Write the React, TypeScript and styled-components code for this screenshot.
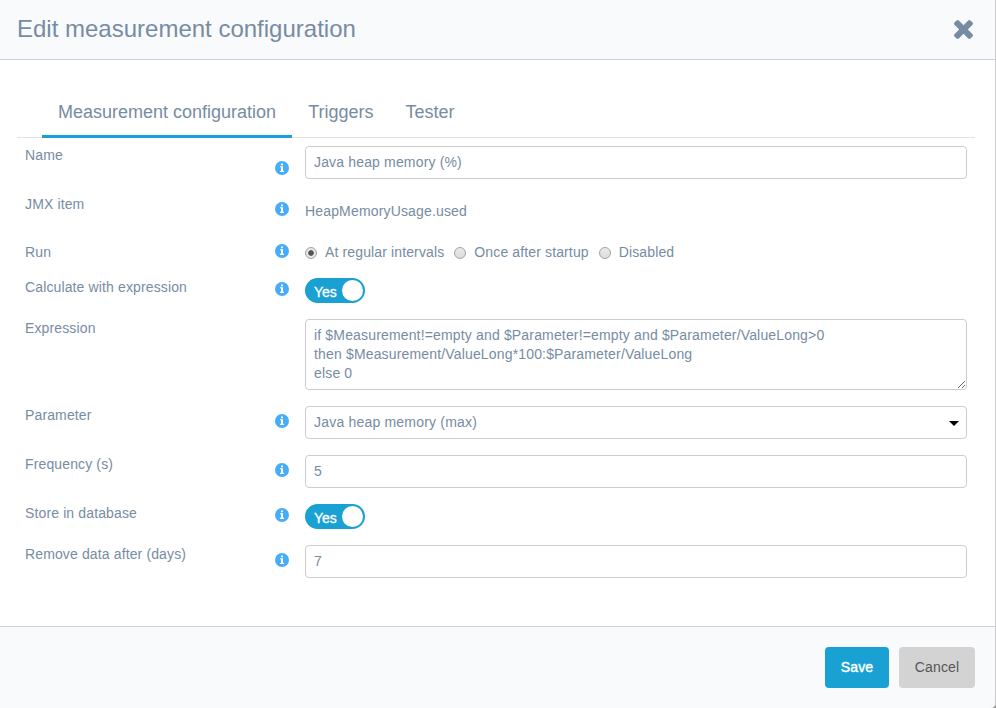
import React from "react";
import styled, { createGlobalStyle } from "styled-components";

const GlobalStyle = createGlobalStyle`
  *, *::before, *::after { box-sizing: border-box; }
  html, body { margin: 0; padding: 0; overflow: hidden; background: #999; }
  body, input, textarea, button {
    font-family: "Liberation Sans", Arial, Helvetica, sans-serif;
    font-size: 14px;
    letter-spacing: 0.16px;
    color: #778ca2;
  }
`;

const Dialog = styled.div`
  display: flex;
  flex-direction: column;
  width: 996px;
  height: 708px;
  background: #fff;
  border-right: 1px solid #ccc;
  border-bottom-right-radius: 5px;
  overflow: hidden;
`;

const Header = styled.header`
  display: flex;
  align-items: center;
  justify-content: space-between;
  height: 60px;
  flex: none;
  padding: 0 22px 2px 17px;
  background: #f8fafc;
  border-bottom: 1px solid #d0d0d0;
`;

const Title = styled.h1`
  margin: 0;
  font-size: 24px;
  line-height: 28px;
  font-weight: 400;
  letter-spacing: 0;
`;

const CloseButton = styled.button`
  display: flex;
  padding: 0;
  margin-top: 2px;
  border: 0;
  background: none;
  svg { width: 19px; height: 19px; fill: #778ca2; }
`;

const Body = styled.main`
  flex: 1;
  padding: 28px 20px 0 17px;
`;

const Tabs = styled.nav`
  display: flex;
  height: 50px;
  padding-left: 25px;
  border-bottom: 1px solid #e3e3e3;
`;

const Tab = styled.button<{ $active?: boolean }>`
  height: 50px;
  padding: 1px 16px 0;
  border: 0;
  border-bottom: 3px solid ${(p) => (p.$active ? "#1aa1d3" : "transparent")};
  background: none;
  font-size: 18px;
  line-height: 24px;
  letter-spacing: 0;
`;

const Form = styled.div`
  padding: 8px 8px 0;
`;

const Row = styled.div<{ $height: number }>`
  display: grid;
  grid-template-columns: 250px 30px 1fr;
  align-items: start;
  height: ${(p) => p.$height}px;
`;

const Label = styled.label`
  line-height: 18px;
  letter-spacing: 0.13px;
`;

const IconSlot = styled.span<{ $top: number }>`
  display: flex;
  padding-top: ${(p) => p.$top}px;
  svg { width: 14px; height: 14px; fill: #47adfb; }
`;

const Input = styled.input`
  display: block;
  width: 100%;
  height: 33px;
  padding: 0 8px 1px;
  border: 1px solid #ccc;
  border-radius: 4px;
  background: #fff;
  outline: 0;
`;

const TextArea = styled.textarea`
  display: block;
  width: 100%;
  height: 71px;
  padding: 6px 8px;
  border: 1px solid #ccc;
  border-radius: 4px;
  line-height: 19px;
  background: #fff;
  outline: 0;
  overflow: hidden;
  resize: vertical;
`;

const Select = styled.button`
  display: flex;
  align-items: center;
  justify-content: space-between;
  width: 100%;
  height: 33px;
  padding: 0 7px 2px 8px;
  border: 1px solid #ccc;
  border-radius: 4px;
  background: #fff;
  letter-spacing: 0.2px;
  svg { width: 10px; height: 5px; margin-top: 4px; }
`;

const PlainValue = styled.span`
  padding-top: 7px;
  line-height: 18px;
`;

const RadioGroup = styled.div`
  display: flex;
  gap: 10px;
`;

const RadioLabel = styled.label`
  display: flex;
  align-items: center;
  line-height: 18px;
  letter-spacing: 0.13px;
`;

const Radio = styled.input`
  appearance: none;
  width: 12px;
  height: 12px;
  margin: 2px 8px 0 0;
  border: 1px solid #a3a3a3;
  border-radius: 50%;
  background: linear-gradient(#eaeaea, #dcdcdc);
  &:checked {
    background: radial-gradient(circle, #555 0 2.4px, #e6e6e6 3.2px);
  }
`;

const Toggle = styled.button`
  display: flex;
  align-items: center;
  justify-content: space-between;
  width: 60px;
  height: 25px;
  padding: 0 2px 0 9px;
  border: 0;
  border-radius: 13px;
  background: #1aa1d3;
  color: #fff;
`;

const ToggleText = styled.span`
  padding-top: 2px;
  letter-spacing: 0;
  -webkit-text-stroke: 0.3px #fff;
`;

const Knob = styled.span`
  width: 21px;
  height: 21px;
  border-radius: 50%;
  background: #fff;
`;

const Footer = styled.footer`
  display: flex;
  justify-content: flex-end;
  gap: 10px;
  flex: none;
  height: 82px;
  padding: 20px 20px 0;
  background: #f8fafc;
  border-top: 1px solid #d0d0d0;
`;

const Button = styled.button<{ $primary?: boolean }>`
  width: ${(p) => (p.$primary ? 64 : 76)}px;
  height: 41px;
  padding: 0 0 1px;
  border: 0;
  border-radius: 4px;
  background: ${(p) => (p.$primary ? "#1aa1d3" : "#d3d3d3")};
  color: ${(p) => (p.$primary ? "#fff" : "#555")};
  -webkit-text-stroke: ${(p) => (p.$primary ? "0.4px #fff" : "0")};
`;

const InfoIcon = () => (
  <svg viewBox="0 0 14 14">
    <circle cx="7" cy="7" r="7" />
    <path
      d="M6 2.4h2v1.8H6zM5 5.2h3v4.6h1v1.2H5V9.8h1V6.2H5z"
      fill="#fff"
    />
  </svg>
);

const CloseIcon = () => (
  <svg viewBox="302 366 1188 1188">
    <path d="M1490 1322q0 40-28 68l-136 136q-28 28-68 28t-68-28l-294-294-294 294q-28 28-68 28t-68-28l-136-136q-28-28-28-68t28-68l294-294-294-294q-28-28-28-68t28-68l136-136q28-28 68-28t68 28l294 294 294-294q28-28 68-28t68 28l136 136q28 28 28 68t-28 68l-294 294 294 294q28 28 28 68z" />
  </svg>
);

type FieldProps = {
  label: string;
  height: number;
  iconTop?: number;
  children: React.ReactNode;
};

const Field = ({ label, height, iconTop, children }: FieldProps) => (
  <Row $height={height}>
    <Label>{label}</Label>
    <IconSlot $top={iconTop ?? 0}>{iconTop !== undefined && <InfoIcon />}</IconSlot>
    {children}
  </Row>
);

const YesToggle = () => (
  <Toggle type="button" role="switch" aria-checked="true">
    <ToggleText>Yes</ToggleText>
    <Knob />
  </Toggle>
);

const expression = `if $Measurement!=empty and $Parameter!=empty and $Parameter/ValueLong>0
then $Measurement/ValueLong*100:$Parameter/ValueLong
else 0`;

export default function App() {
  return (
    <>
      <GlobalStyle />
      <Dialog>
        <Header>
          <Title>Edit measurement configuration</Title>
          <CloseButton aria-label="Close">
            <CloseIcon />
          </CloseButton>
        </Header>
        <Body>
          <Tabs>
            <Tab $active>Measurement configuration</Tab>
            <Tab>Triggers</Tab>
            <Tab>Tester</Tab>
          </Tabs>
          <Form>
            <Field label="Name" height={49} iconTop={15}>
              <Input defaultValue="Java heap memory (%)" />
            </Field>
            <Field label="JMX item" height={48} iconTop={7}>
              <PlainValue>HeapMemoryUsage.used</PlainValue>
            </Field>
            <Field label="Run" height={35} iconTop={1}>
              <RadioGroup>
                <RadioLabel><Radio type="radio" name="run" defaultChecked />At regular intervals</RadioLabel>
                <RadioLabel><Radio type="radio" name="run" />Once after startup</RadioLabel>
                <RadioLabel><Radio type="radio" name="run" />Disabled</RadioLabel>
              </RadioGroup>
            </Field>
            <Field label="Calculate with expression" height={41} iconTop={4}>
              <YesToggle />
            </Field>
            <Field label="Expression" height={87}>
              <TextArea defaultValue={expression} spellCheck={false} />
            </Field>
            <Field label="Parameter" height={49} iconTop={8}>
              <Select type="button">
                Java heap memory (max)
                <svg viewBox="0 0 10 5"><path d="M0 0h10L5 5z" fill="#000" /></svg>
              </Select>
            </Field>
            <Field label="Frequency (s)" height={49} iconTop={8}>
              <Input defaultValue="5" />
            </Field>
            <Field label="Store in database" height={41} iconTop={4}>
              <YesToggle />
            </Field>
            <Field label="Remove data after (days)" height={33} iconTop={8}>
              <Input defaultValue="7" />
            </Field>
          </Form>
        </Body>
        <Footer>
          <Button $primary>Save</Button>
          <Button>Cancel</Button>
        </Footer>
      </Dialog>
    </>
  );
}
